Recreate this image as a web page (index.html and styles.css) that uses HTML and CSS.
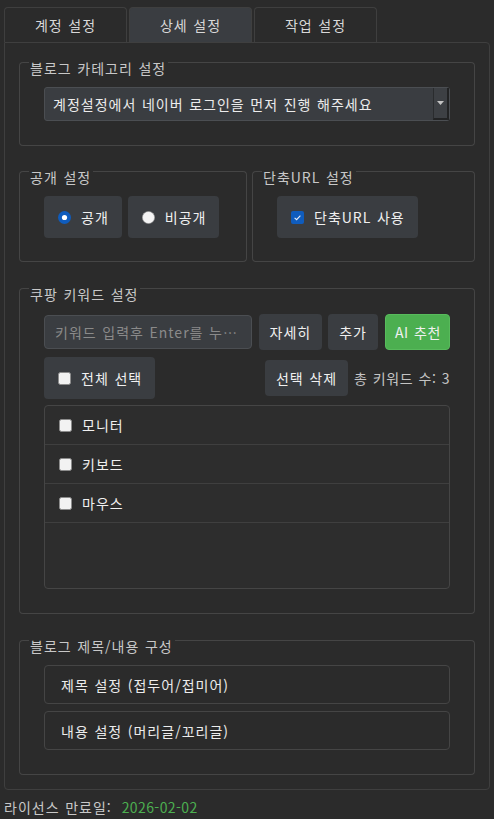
FILE: index.html
```html
<!DOCTYPE html>
<html lang="ko">
<head>
<meta charset="utf-8">
<link rel="stylesheet" href="styles.css">
</head>
<body>
<div class="app">
  <div class="tabs">
    <div class="tab">계정 설정</div>
    <div class="tab active">상세 설정</div>
    <div class="tab">작업 설정</div>
  </div>
  <div class="panel">
    <section class="group">
      <div class="group-head"><span class="hl"></span><span class="title">블로그 카테고리 설정</span><span class="hr"></span></div>
      <div class="group-body body-cat">
        <div class="combo">
          <span class="combo-text">계정설정에서 네이버 로그인을 먼저 진행 해주세요</span>
          <span class="combo-btn"><svg width="7" height="4" viewBox="0 0 7 4"><polygon points="0,0 7,0 3.5,4" fill="#c4c4c4"/></svg></span>
        </div>
      </div>
    </section>

    <div class="group-row">
      <section class="group g-public">
        <div class="group-head"><span class="hl"></span><span class="title">공개 설정</span><span class="hr"></span></div>
        <div class="group-body body-opt">
          <div class="opt-row">
            <div class="opt"><svg width="13" height="13" viewBox="0 0 13 13"><circle cx="6.5" cy="6.5" r="6.5" fill="#0f5cbd"/><circle cx="6.5" cy="6.5" r="2.6" fill="#ffffff"/></svg><span>공개</span></div>
            <div class="opt"><svg width="13" height="13" viewBox="0 0 13 13"><circle cx="6.5" cy="6.5" r="6.1" fill="#f4f4f4" stroke="#9a9a9a" stroke-width="0.6"/></svg><span>비공개</span></div>
          </div>
        </div>
      </section>
      <section class="group g-short">
        <div class="group-head"><span class="hl"></span><span class="title">단축URL 설정</span><span class="hr"></span></div>
        <div class="group-body body-opt">
          <div class="opt-row">
            <div class="opt"><svg width="13" height="13" viewBox="0 0 13 13"><rect width="13" height="13" rx="2" fill="#0f5cbd"/><path d="M3.6 6.9 L5.6 8.7 L9.4 4.6" fill="none" stroke="#e8eef8" stroke-width="1.1"/></svg><span>단축URL 사용</span></div>
          </div>
        </div>
      </section>
    </div>

    <section class="group g-keyword">
      <div class="group-head"><span class="hl"></span><span class="title">쿠팡 키워드 설정</span><span class="hr"></span></div>
      <div class="group-body body-kw">
        <div class="kw-row">
          <input class="kw-input" type="text" placeholder="키워드 입력후 Enter를 누…">
          <div class="btn">자세히</div>
          <div class="btn">추가</div>
          <div class="btn green">AI 추천</div>
        </div>
        <div class="sel-row">
          <div class="opt"><svg width="13" height="13" viewBox="0 0 13 13"><rect x="0.5" y="0.5" width="12" height="12" rx="2" fill="#f2f2f2" stroke="#8c8c8c"/></svg><span>전체 선택</span></div>
          <div class="btn del">선택 삭제</div>
          <span class="count">총 키워드 수: 3</span>
        </div>
        <div class="kw-list">
          <div class="kw-item"><svg width="13" height="13" viewBox="0 0 13 13"><rect x="0.5" y="0.5" width="12" height="12" rx="2" fill="#f2f2f2" stroke="#8c8c8c"/></svg><span>모니터</span></div>
          <div class="kw-item"><svg width="13" height="13" viewBox="0 0 13 13"><rect x="0.5" y="0.5" width="12" height="12" rx="2" fill="#f2f2f2" stroke="#8c8c8c"/></svg><span>키보드</span></div>
          <div class="kw-item"><svg width="13" height="13" viewBox="0 0 13 13"><rect x="0.5" y="0.5" width="12" height="12" rx="2" fill="#f2f2f2" stroke="#8c8c8c"/></svg><span>마우스</span></div>
        </div>
      </div>
    </section>

    <section class="group g-compose">
      <div class="group-head"><span class="hl"></span><span class="title">블로그 제목/내용 구성</span><span class="hr"></span></div>
      <div class="group-body body-compose">
        <div class="wide-btn">제목 설정 (접두어/접미어)</div>
        <div class="wide-btn">내용 설정 (머리글/꼬리글)</div>
      </div>
    </section>
  </div>
  <div class="footer"><span>라이선스 만료일:</span><span class="date">2026-02-02</span></div>
</div>
</body>
</html>
```

FILE: styles.css
```css
* { box-sizing: border-box; }
html, body { margin: 0; padding: 0; }
body {
  background: #2b2b2b;
  font-family: "Noto Sans CJK KR", "Noto Sans", sans-serif;
  font-size: 14px;
  color: #ececec;
  letter-spacing: 1px;
  word-spacing: 0.7px;
}
.app { padding: 7px 4px 0 4px; width: 494px; }

.tabs { display: flex; gap: 2px; }
.tab {
  width: 123px;
  height: 35px;
  border: 1px solid #3f3f3f;
  border-bottom: none;
  border-radius: 4px 4px 0 0;
  display: flex;
  align-items: center;
  justify-content: center;
  color: #d8d8d8;
  line-height: 16px;
}
.tab.active { background: #3a3d41; }

.panel {
  width: 486px;
  border: 1px solid #3f3f3f;
  border-radius: 0 4px 4px 4px;
  padding: 19px 14px 14px;
  display: flex;
  flex-direction: column;
}
.group-row { display: flex; gap: 5px; margin-top: 25px; }
.g-public { width: 228px; }
.g-short { flex: 1; }
.g-keyword { margin-top: 26px; }
.g-compose { margin-top: 26px; }

.group-head { display: flex; height: 16px; }
.hl {
  width: 10px;
  border-top: 1px solid #454545;
  border-left: 1px solid #454545;
  border-top-left-radius: 4px;
}
.hr {
  flex: 1;
  border-top: 1px solid #454545;
  border-right: 1px solid #454545;
  border-top-right-radius: 4px;
}
.title {
  padding: 0 2px 0 1px;
  line-height: 13px;
  color: #c8c8c8;
  white-space: nowrap;
}
.group-body {
  border: 1px solid #454545;
  border-top: none;
  border-radius: 0 0 4px 4px;
  padding: 9px 24px 24px;
}
.body-opt { padding-bottom: 23px; }
.body-kw { padding-top: 10px; }

.combo {
  height: 34px;
  border: 1px solid #4b4e52;
  background: #3a3d41;
  border-radius: 3px;
  display: flex;
  align-items: center;
  padding-left: 8px;
  color: #ececec;
}
.combo-text { flex: 1; white-space: nowrap; }
.combo-btn {
  width: 16px;
  height: 32px;
  border-left: 1px solid #2a2c2e;
  border-right: 2px solid #222324;
  border-bottom: 2px solid #222324;
  background: #3d4044;
  display: flex;
  align-items: center;
  justify-content: center;
}

.opt-row { display: flex; gap: 6px; }
.opt {
  height: 42px;
  padding: 0 13px 0 14px;
  display: flex;
  align-items: center;
  gap: 10px;
  background: #3a3d41;
  border-radius: 4px;
  color: #f0f0f0;
  white-space: nowrap;
}
.opt svg { flex: none; }

.kw-row { display: flex; align-items: center; gap: 6px; height: 36px; }
.kw-input {
  flex: 1;
  min-width: 0;
  height: 34px;
  margin: 0 1px 0 0;
  border: 1px solid #4b4e52;
  background: #3a3d41;
  border-radius: 4px;
  padding: 0 10px;
  font: inherit;
  letter-spacing: inherit;
  word-spacing: inherit;
  color: #ececec;
  outline: none;
}
.kw-input::placeholder { color: #8a8a8a; }
.btn {
  height: 36px;
  padding: 0 11px;
  display: flex;
  align-items: center;
  background: #3a3d41;
  border-radius: 4px;
  color: #f0f0f0;
  white-space: nowrap;
}
.btn.green {
  background: #4caf50;
  border: 1px solid #58bb5c;
  margin-left: 1px;
  padding: 0 8px 0 9px;
  letter-spacing: 0.6px;
}

.sel-row { display: flex; align-items: center; height: 42px; margin-top: 7px; }
.btn.del { margin-left: auto; }
.count { margin-left: 6px; color: #c4c4c4; white-space: nowrap; letter-spacing: 0.6px; }

.kw-list {
  margin-top: 6px;
  height: 184px;
  border: 1px solid #454545;
  border-radius: 4px;
  background: #2d2d2d;
}
.kw-item {
  height: 39px;
  border-bottom: 1px solid #3f3f3f;
  display: flex;
  align-items: center;
  gap: 10px;
  padding-left: 14px;
  color: #f0f0f0;
}

.wide-btn {
  height: 39px;
  border: 1px solid #454545;
  border-radius: 4px;
  padding-left: 16px;
  display: flex;
  align-items: center;
  color: #ececec;
}
.wide-btn + .wide-btn { margin-top: 7px; }

.footer {
  margin-top: 7px;
  line-height: 20px;
  color: #c8c8c8;
  display: flex;
}
.date { margin-left: 10px; color: #4caf50; letter-spacing: 0.4px; }
```
